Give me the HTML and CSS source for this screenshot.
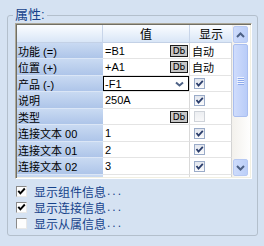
FILE: index.html
```html
<!DOCTYPE html>
<html>
<head>
<meta charset="utf-8">
<link rel="stylesheet" href="styles.css">
</head>
<body>
<fieldset class="group">
  <legend class="legend">属性:</legend>
  <div class="frame">
    <div class="gridwrap">
      <div class="grid">
        <div class="hd hd-label"></div>
        <div class="hd hd-val">值</div>
        <div class="hd hd-show">显示</div>

        <div class="lbl">功能 (=)</div>
        <div class="val">=B1<span class="db">Db</span></div>
        <div class="show txt">自动</div>

        <div class="lbl">位置 (+)</div>
        <div class="val">+A1<span class="db">Db</span></div>
        <div class="show txt">自动</div>

        <div class="lbl">产品 (-)</div>
        <div class="val combo-cell"><div class="combo"><span>-F1</span><svg class="arrow" width="9" height="6" viewBox="0 0 9 6"><path d="M1 1.5 L4.5 4.5 L8 1.5" fill="none" stroke="#4d6185" stroke-width="2"/></svg></div></div>
        <div class="show"><span class="chk on"></span></div>

        <div class="lbl">说明</div>
        <div class="val">250A</div>
        <div class="show"><span class="chk on"></span></div>

        <div class="lbl">类型</div>
        <div class="val"><span></span><span class="db">Db</span></div>
        <div class="show"><span class="chk dis"></span></div>

        <div class="lbl">连接文本 00</div>
        <div class="val">1</div>
        <div class="show"><span class="chk on"></span></div>

        <div class="lbl">连接文本 01</div>
        <div class="val">2</div>
        <div class="show"><span class="chk on"></span></div>

        <div class="lbl">连接文本 02</div>
        <div class="val">3</div>
        <div class="show"><span class="chk on"></span></div>

        <div class="lbl">连接文本 03</div>
        <div class="val">4</div>
        <div class="show"><span class="chk on"></span></div>
      </div>
    </div>
    <div class="vscroll">
      <div class="sbtn"><svg width="9" height="6" viewBox="0 0 9 6"><path d="M1 5 L4.5 1.5 L8 5" fill="none" stroke="#4d6185" stroke-width="2"/></svg></div>
      <div class="track">
        <div class="thumb"><svg width="7" height="8" viewBox="0 0 7 8"><path d="M0 0.5H7M0 2.5H7M0 4.5H7M0 6.5H7" stroke="#eef3fe" stroke-width="1"/><path d="M1 1.5H7M1 3.5H7M1 5.5H7M1 7.5H7" stroke="#8eaaec" stroke-width="1"/></svg></div>
      </div>
      <div class="sbtn"><svg width="9" height="6" viewBox="0 0 9 6"><path d="M1 1 L4.5 4.5 L8 1" fill="none" stroke="#4d6185" stroke-width="2"/></svg></div>
    </div>
  </div>
  <div class="opts">
    <div class="opt"><span class="box on"></span>显示组件信息<span class="dots">...</span></div>
    <div class="opt"><span class="box on"></span>显示连接信息<span class="dots">...</span></div>
    <div class="opt"><span class="box"></span>显示从属信息<span class="dots">...</span></div>
  </div>
</fieldset>
</body>
</html>
```
FILE: styles.css
```css
html, body {
  margin: 0;
  padding: 0;
}
body {
  width: 264px;
  height: 246px;
  overflow: hidden;
  background: #d5e2f2;
  font-family: "Liberation Sans", "Noto Sans CJK SC", sans-serif;
  color: #000;
}
.group {
  box-sizing: border-box;
  margin: 7px 0 0 7px;
  width: 251px;
  height: 229px;
  padding: 0 5px 0 7px;
  border: 1px solid #b3bfcc;
  border-radius: 3px;
  min-width: 0;
}
.legend {
  margin-left: -2px;
  padding: 0 2px;
  font-size: 13px;
  line-height: 16px;
  color: #15428b;
}
.frame {
  box-sizing: border-box;
  width: 237px;
  height: 156px;
  display: flex;
  padding: 1px;
  border: 1px solid;
  border-color: #aca899 #ffffff #ffffff #aca899;
  box-shadow: inset 1px 1px 0 #716f64, inset -1px -1px 0 #f1efe2;
  background: #fff;
}
.gridwrap {
  width: 215px;
  height: 152px;
  overflow: hidden;
  background: #fff;
}
.grid {
  display: grid;
  grid-template-columns: 86px 87px 42px;
  grid-template-rows: 18px repeat(4, 16px 17px) 16px;
  font-size: 11px;
}
.grid > div {
  box-sizing: border-box;
  display: flex;
  align-items: center;
  white-space: nowrap;
  overflow: hidden;
}
.hd {
  background: linear-gradient(#fbfdff, #d9e6f7);
  border-bottom: 1px solid #c3d1e6;
  font-size: 12px;
  justify-content: center;
  color: #000;
}
.hd-val, .hd-label {
  border-right: 1px solid #c8d5e9;
}
.lbl {
  background: linear-gradient(#c9daf2, #aec5e9);
  border-bottom: 1px solid #dbe6f6;
  padding-left: 1px;
}
.val {
  border-bottom: 1px solid #e4e4e4;
  border-right: 1px solid #d9d9d9;
  padding-left: 2px;
  justify-content: space-between;
}
.show {
  border-bottom: 1px solid #e4e4e4;
  border-right: 1px solid #d3d3d3;
  padding-left: 4px;
}
.show.txt {
  padding-left: 2px;
}
.db {
  box-sizing: border-box;
  width: 18px;
  height: 12px;
  background: #c6c6c6;
  border: 1px solid #1c1c1c;
  font-family: "DejaVu Sans", sans-serif;
  font-size: 9px;
  line-height: 10px;
  text-align: center;
  margin-right: 1px;
}
.combo-cell {
  padding: 0;
  align-items: flex-start;
}
.combo {
  box-sizing: border-box;
  width: 87px;
  height: 15px;
  border: 1px solid #000;
  display: flex;
  align-items: center;
  justify-content: space-between;
  padding: 0 4px 0 1px;
  background: #fff;
}
.chk {
  box-sizing: border-box;
  width: 11px;
  height: 11px;
  border: 1px solid #9aabc8;
  background: linear-gradient(#e2e6ee, #fbfbfc);
}
.chk.on {
  background: url("data:image/svg+xml;utf8,<svg xmlns='http://www.w3.org/2000/svg' width='9' height='9' viewBox='0 0 9 9'><path d='M1.5 4 L3.5 6.5 L7.8 1.8' fill='none' stroke='%232a3d6b' stroke-width='1.8'/></svg>") center/9px 9px no-repeat, linear-gradient(#e2e6ee, #fbfbfc);
}
.chk.dis {
  border-color: #cfd3d9;
  background: linear-gradient(#eceef1, #f8f8f9);
}
.vscroll {
  box-sizing: border-box;
  width: 18px;
  height: 152px;
  padding: 1px 2px 1px 1px;
  display: flex;
  flex-direction: column;
  background: linear-gradient(to right, #f3f1ec, #fefefe);
}
.sbtn {
  box-sizing: border-box;
  height: 17px;
  flex: none;
  border: 1px solid #b7c9f3;
  border-radius: 2px;
  background: linear-gradient(to right, #cddbfb, #bccff8);
  display: flex;
  align-items: center;
  justify-content: center;
}
.track {
  flex: 1;
  display: flex;
  flex-direction: column;
}
.thumb {
  box-sizing: border-box;
  margin-top: 1px;
  height: 73px;
  border: 1px solid #a9bef0;
  border-radius: 2px;
  background: linear-gradient(to right, #cfdcfc, #b9ccf8);
  display: flex;
  align-items: center;
  justify-content: center;
}
.opts {
  margin-top: 4px;
  display: flex;
  flex-direction: column;
}
.opt {
  height: 16px;
  display: flex;
  align-items: center;
  font-size: 12px;
  color: #15428b;
}
.box {
  box-sizing: border-box;
  width: 11px;
  height: 11px;
  margin: 0 7px 0 1px;
  border: 1px solid;
  border-color: #8a8a8a #e8e8e8 #e8e8e8 #8a8a8a;
  background: #fdfdfd;
}
.box.on {
  background: url("data:image/svg+xml;utf8,<svg xmlns='http://www.w3.org/2000/svg' width='9' height='9' viewBox='0 0 9 9'><path d='M1.3 3.8 L3.4 6.3 L7.8 1.5' fill='none' stroke='%23000' stroke-width='1.9'/></svg>") center/9px 9px no-repeat, #fdfdfd;
}
.dots {
  letter-spacing: 2px;
  margin-left: 1px;
}
```
